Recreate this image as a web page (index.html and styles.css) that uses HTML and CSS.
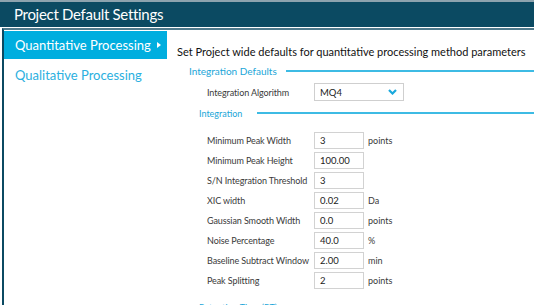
FILE: index.html
```html
<!DOCTYPE html>
<html lang="en">
<head>
    <meta charset="UTF-8">
    <title>Project Default Settings</title>
    <link rel="stylesheet" href="styles.css">
</head>
<body>
    <div class="titlebar">Project Default Settings</div>
    <div class="frame">
        <div class="sidebar">
            <div class="nav-item active">Quantitative Processing <span class="caret"></span></div>
            <div class="nav-item">Qualitative Processing</div>
        </div>
        <div class="content">
            <div class="intro">Set Project wide defaults for quantitative processing method parameters</div>

            <div class="section-head top"><span>Integration Defaults</span><i></i></div>
            <div class="algo-row">
                <label>Integration Algorithm</label>
                <div class="select">MQ4
                    <svg width="9" height="6" viewBox="0 0 9 6"><path d="M1 1 L4.5 4.5 L8 1" fill="none" stroke="#1aa9dd" stroke-width="2.2"/></svg>
                </div>
            </div>

            <div class="section-head sub"><span>Integration</span><i></i></div>
            <div class="param-grid">
                <label>Minimum Peak Width</label><div class="field">3</div><span class="unit">points</span>
                <label>Minimum Peak Height</label><div class="field">100.00</div><span class="unit"></span>
                <label>S/N Integration Threshold</label><div class="field">3</div><span class="unit"></span>
                <label>XIC width</label><div class="field">0.02</div><span class="unit">Da</span>
                <label>Gaussian Smooth Width</label><div class="field">0.0</div><span class="unit">points</span>
                <label>Noise Percentage</label><div class="field">40.0</div><span class="unit">%</span>
                <label>Baseline Subtract Window</label><div class="field">2.00</div><span class="unit">min</span>
                <label>Peak Splitting</label><div class="field">2</div><span class="unit">points</span>
            </div>

            <div class="section-head sub last"><span>Retention Time (RT)</span><i></i></div>
        </div>
    </div>
</body>
</html>
```

FILE: styles.css
```css
html, body {
    margin: 0;
    height: 305px;
    overflow: hidden;
    background: #fff;
    font-family: Lato, 'Open Sans', sans-serif;
}
.titlebar {
    height: 25px;
    line-height: 25px;
    border-top: 2px solid #8da3ae;
    background: #0b4a62;
    color: #fff;
    font-size: 15px;
    letter-spacing: -0.3px;
    padding-left: 14px;
    margin-bottom: 1px;
}
.frame {
    display: flex;
    margin-left: 2px;
    border-left: 2px solid #0b4a62;
    border-top: 2px solid #4f7a8c;
    height: 280px;
}
.sidebar {
    width: 163px;
    flex-shrink: 0;
    padding-top: 1px;
}
.nav-item {
    height: 28px;
    line-height: 28px;
    padding-left: 11px;
    font-size: 13px;
    color: #2bb0e0;
    margin-bottom: 2px;
    white-space: nowrap;
}
.nav-item.active {
    background: #00aedf;
    color: #fff;
}
.caret {
    display: inline-block;
    width: 0; height: 0;
    border-left: 4px solid #fff;
    border-top: 3px solid transparent;
    border-bottom: 3px solid transparent;
    margin-left: 3px;
    vertical-align: 2px;
}
.content {
    flex: 1;
    padding-left: 10px;
    padding-top: 14px;
    min-width: 0;
}
.intro {
    font-size: 11px;
    line-height: 16px;
    color: #111;
    white-space: nowrap;
}
.section-head {
    display: flex;
    align-items: center;
    height: 14px;
    color: #21a6d8;
    white-space: nowrap;
}
.section-head i {
    flex: 1;
    height: 2px;
    background: #3dbbe4;
}
.section-head.top {
    margin-top: 4px;
    padding-left: 12px;
    font-size: 10px;
}
.section-head.top i { margin-left: 9px; }
.section-head.sub {
    padding-left: 22px;
    font-size: 9px;
    margin-top: 5px;
}
.section-head.sub i { margin-left: 15px; }
.section-head.last { margin-top: 10px; }
.algo-row {
    display: flex;
    align-items: center;
    margin-top: 5px;
    padding-left: 30px;
    height: 18px;
}
label {
    font-size: 9px;
    letter-spacing: -0.1px;
    color: #3a3a3a;
    white-space: nowrap;
}
.algo-row label { width: 107px; }
.select {
    box-sizing: border-box;
    width: 90px;
    height: 18px;
    border: 1px solid #cfcfcf;
    display: flex;
    align-items: center;
    justify-content: space-between;
    padding: 0 6px 0 5px;
    font-size: 9.5px;
    color: #222;
}
.param-grid {
    display: grid;
    grid-template-columns: 107px 50px auto;
    grid-auto-rows: 20px;
    align-items: center;
    padding-left: 30px;
    margin-top: 10px;
}
.field {
    box-sizing: border-box;
    height: 17px;
    border: 1px solid #d2d2d2;
    font-size: 9.5px;
    line-height: 15px;
    padding-left: 5px;
    color: #222;
}
.unit {
    font-size: 9px;
    color: #3a3a3a;
    padding-left: 4px;
}
```
